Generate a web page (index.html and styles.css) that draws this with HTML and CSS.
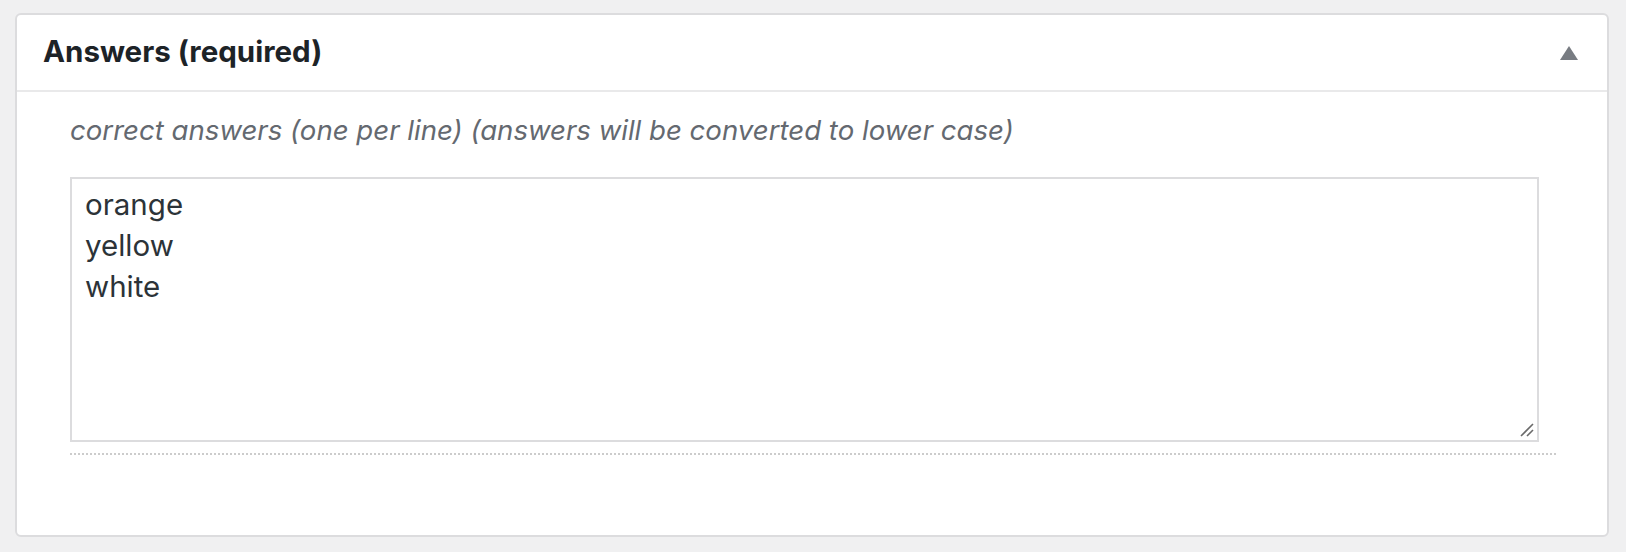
FILE: index.html
```html
<!DOCTYPE html>
<html>
<head>
<meta charset="utf-8">
<link rel="stylesheet" href="styles.css">
</head>
<body>
<div class="postbox">
  <div class="postbox-header">
    <h2 class="hndle">Answers (required)</h2>
    <span class="toggle-indicator"></span>
  </div>
  <div class="inside">
    <p class="description">correct answers (one per line) (answers will be converted to lower case)</p>
    <div class="field">
      <div class="textarea">
        <div class="line">orange</div>
        <div class="line">yellow</div>
        <div class="line">white</div>
        <svg class="grip" width="14" height="14" viewBox="0 0 14 14"><path d="M1 13 L13 1 M7 13 L13 7" stroke="#6a6a6a" stroke-width="1.6" fill="none"/></svg>
      </div>
    </div>
  </div>
</div>
</body>
</html>
```

FILE: styles.css
```css
html, body {
  margin: 0;
  padding: 0;
  background: #f0f0f1;
  font-family: "Inter", "Liberation Sans", sans-serif;
}
.postbox {
  margin: 13px 0 0 15px;
  width: 1594px;
  height: 524px;
  box-sizing: border-box;
  background: #fff;
  border: 2px solid #dcdcde;
  border-radius: 6px;
}
.postbox-header {
  height: 75px;
  border-bottom: 2px solid #e9e9ea;
  display: flex;
  align-items: center;
  justify-content: space-between;
  padding: 0 26px 0 26px;
}
.hndle {
  margin: 0 0 3px 0;
  font-size: 29.5px;
  font-weight: 700;
  color: #1d2327;
}
.toggle-indicator {
  width: 0;
  height: 0;
  border-left: 9px solid transparent;
  border-right: 9px solid transparent;
  border-bottom: 14px solid #787c82;
  margin-right: 3px;
}
.inside {
  padding: 0 51px 0 53px;
}
.description {
  margin: 21px 0 0 0;
  font-size: 27.6px;
  font-style: italic;
  color: #646970;
}
.field {
  margin-top: 30px;
  padding-bottom: 11px;
  border-bottom: 2px dotted #ccc;
}
.textarea {
  position: relative;
  width: 1469px;
  height: 265px;
  box-sizing: border-box;
  border: 2px solid #dcdcde;
  padding: 5px 13px;
  font-size: 29.5px;
  line-height: 41px;
  color: #2c3338;
}
.grip {
  position: absolute;
  right: 3px;
  bottom: 3px;
}
```
